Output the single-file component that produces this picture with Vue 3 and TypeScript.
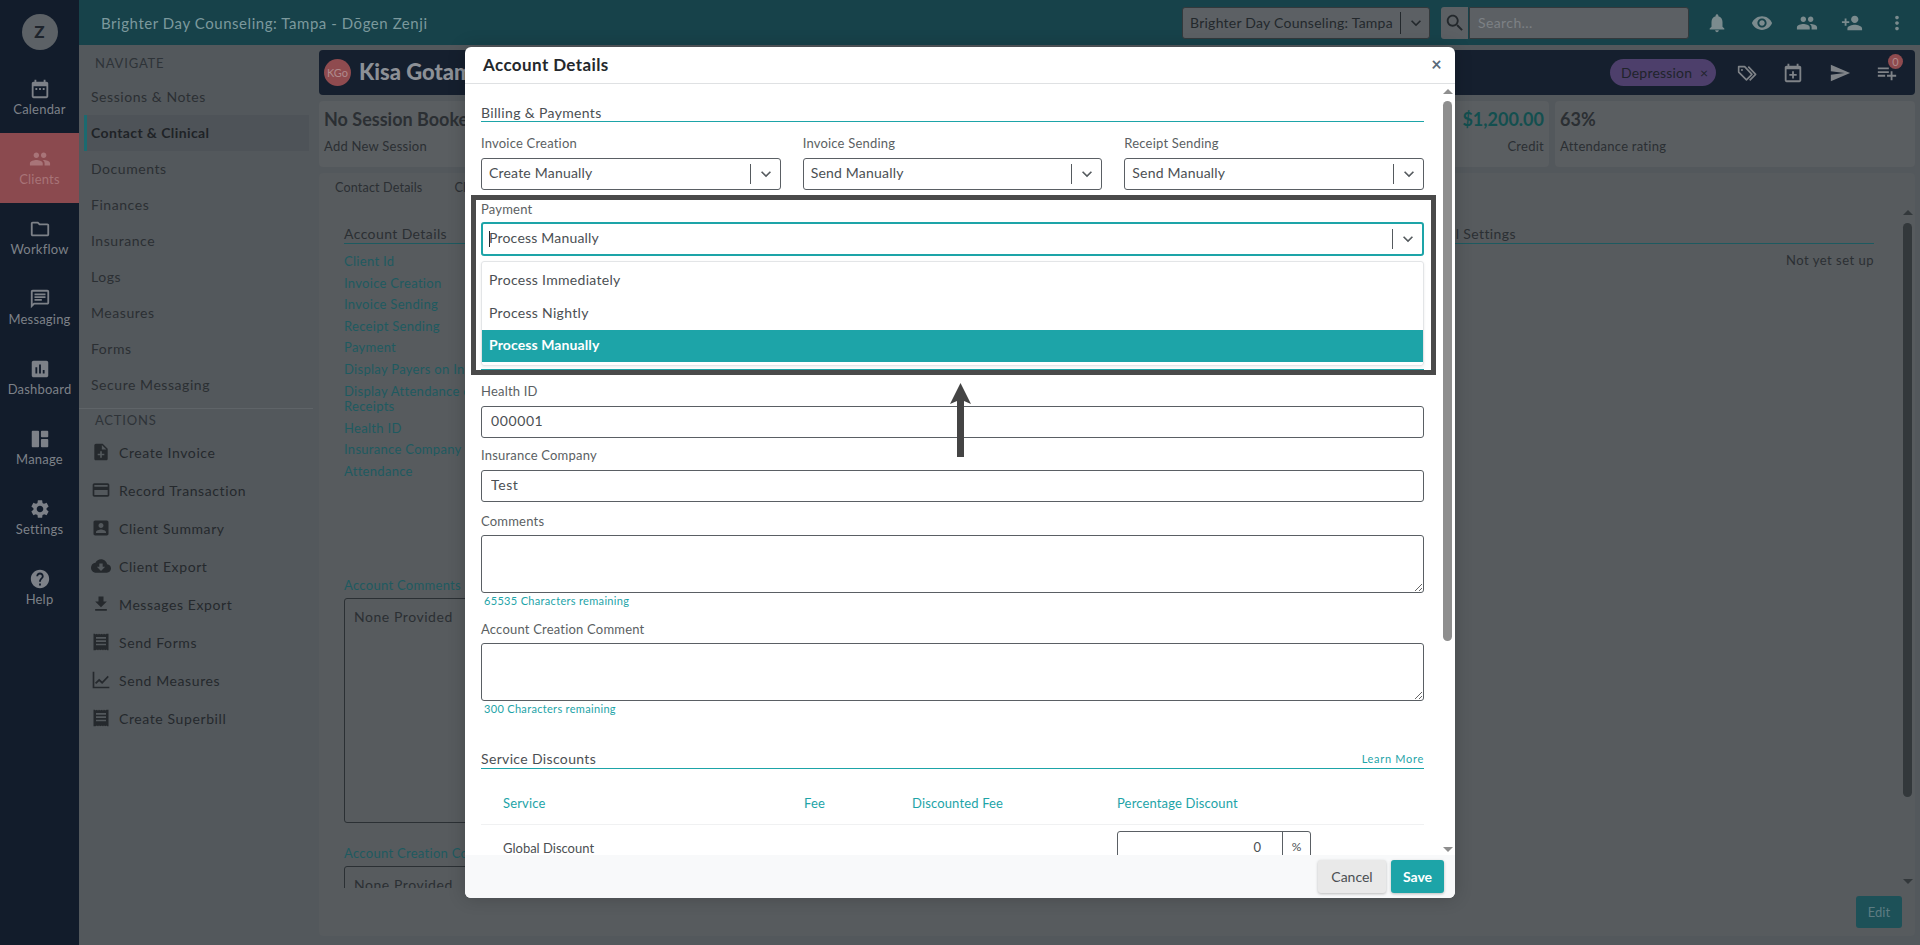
<script setup lang="ts">
// Material-style icon paths, keyed by name
const icons: Record<string, string> = {
  calendar: 'M9 11H7v2h2v-2zm4 0h-2v2h2v-2zm4 0h-2v2h2v-2zm2-7h-1V2h-2v2H8V2H6v2H5c-1.11 0-1.99.9-1.99 2L3 20c0 1.1.89 2 2 2h14c1.1 0 2-.9 2-2V6c0-1.1-.9-2-2-2zm0 16H5V9h14v11z',
  people: 'M16 11c1.66 0 2.99-1.34 2.99-3S17.66 5 16 5c-1.66 0-3 1.34-3 3s1.34 3 3 3zm-8 0c1.66 0 2.99-1.34 2.99-3S9.66 5 8 5C6.34 5 5 6.34 5 8s1.34 3 3 3zm0 2c-2.33 0-7 1.17-7 3.5V19h14v-2.5c0-2.33-4.67-3.5-7-3.5zm8 0c-.29 0-.62.02-.97.05 1.16.84 1.97 1.97 1.97 3.45V19h6v-2.5c0-2.33-4.67-3.5-7-3.5z',
  folder: 'M9.17 6l2 2H20v10H4V6h5.17M10 4H4c-1.1 0-1.99.9-1.99 2L2 18c0 1.1.9 2 2 2h16c1.1 0 2-.9 2-2V8c0-1.1-.9-2-2-2h-8l-2-2z',
  message: 'M20 2H4c-1.1 0-1.99.9-1.99 2L2 22l4-4h14c1.1 0 2-.9 2-2V4c0-1.1-.9-2-2-2zm0 14H5.17L4 17.17V4h16v12zM6 12h8v2H6zm0-3h12v2H6zm0-3h12v2H6z',
  chart: 'M19 3H5c-1.1 0-2 .9-2 2v14c0 1.1.9 2 2 2h14c1.1 0 2-.9 2-2V5c0-1.1-.9-2-2-2zM9 17H7v-7h2v7zm4 0h-2V7h2v10zm4 0h-2v-4h2v4z',
  manage: 'M4 3h6a1 1 0 0 1 1 1v16a1 1 0 0 1-1 1H4a1 1 0 0 1-1-1V4a1 1 0 0 1 1-1zm10 0h6a1 1 0 0 1 1 1v5a1 1 0 0 1-1 1h-6a1 1 0 0 1-1-1V4a1 1 0 0 1 1-1zm0 9h6a1 1 0 0 1 1 1v7a1 1 0 0 1-1 1h-6a1 1 0 0 1-1-1v-7a1 1 0 0 1 1-1z',
  gear: 'M19.14 12.94c.04-.3.06-.61.06-.94 0-.32-.02-.64-.07-.94l2.03-1.58c.18-.14.23-.41.12-.61l-1.92-3.32c-.12-.22-.37-.29-.59-.22l-2.39.96c-.5-.38-1.03-.7-1.62-.94l-.36-2.54c-.04-.24-.24-.41-.48-.41h-3.84c-.24 0-.43.17-.47.41l-.36 2.54c-.59.24-1.13.57-1.62.94l-2.39-.96c-.22-.08-.47 0-.59.22L2.74 8.87c-.12.21-.08.47.12.61l2.03 1.58c-.05.3-.09.63-.09.94s.02.64.07.94l-2.03 1.58c-.18.14-.23.41-.12.61l1.92 3.32c.12.22.37.29.59.22l2.39-.96c.5.38 1.03.7 1.62.94l.36 2.54c.05.24.24.41.48.41h3.84c.24 0 .44-.17.47-.41l.36-2.54c.59-.24 1.13-.56 1.62-.94l2.39.96c.22.08.47 0 .59-.22l1.92-3.32c.12-.22.07-.47-.12-.61l-2.01-1.58zM12 15.6c-1.98 0-3.6-1.62-3.6-3.6s1.62-3.6 3.6-3.6 3.6 1.62 3.6 3.6-1.62 3.6-3.6 3.6z',
  help: 'M12 2C6.48 2 2 6.48 2 12s4.48 10 10 10 10-4.48 10-10S17.52 2 12 2zm1 17h-2v-2h2v2zm2.07-7.75l-.9.92C13.45 12.9 13 13.5 13 15h-2v-.5c0-1.1.45-2.1 1.17-2.83l1.24-1.26c.37-.36.59-.86.59-1.41 0-1.1-.9-2-2-2s-2 .9-2 2H8c0-2.21 1.79-4 4-4s4 1.79 4 4c0 .88-.36 1.68-.93 2.25z',
  noteAdd: 'M14 2H6c-1.1 0-1.99.9-1.99 2L4 20c0 1.1.89 2 1.99 2H18c1.1 0 2-.9 2-2V8l-6-6zm2 14h-3v3h-2v-3H8v-2h3v-3h2v3h3v2zm-3-7V3.5L18.5 9H13z',
  card: 'M20 4H4c-1.11 0-1.99.89-1.99 2L2 18c0 1.11.89 2 2 2h16c1.11 0 2-.89 2-2V6c0-1.11-.89-2-2-2zm0 14H4v-6h16v6zm0-10H4V6h16v2z',
  accountBox: 'M3 5v14c0 1.1.89 2 2 2h14c1.1 0 2-.9 2-2V5c0-1.1-.9-2-2-2H5c-1.11 0-2 .9-2 2zm12 4c0 1.66-1.34 3-3 3s-3-1.34-3-3 1.34-3 3-3 3 1.34 3 3zm-9 8c0-2 4-3.1 6-3.1s6 1.1 6 3.1v1H6v-1z',
  cloud: 'M19.35 10.04C18.67 6.59 15.64 4 12 4 9.11 4 6.6 5.64 5.35 8.04 2.34 8.36 0 10.91 0 14c0 3.31 2.69 6 6 6h13c2.76 0 5-2.24 5-5 0-2.64-2.05-4.78-4.65-4.96zM17 13l-5 5-5-5h3V9h4v4h3z',
  download: 'M19 9h-4V3H9v6H5l7 7 7-7zM5 18v2h14v-2H5z',
  receipt: 'M3 2h1.5l1 1 1-1 1 1 1-1 1 1 1-1 1 1 1-1 1 1 1-1 1 1 1-1 1 1 1-1H21v20h-1.5l-1-1-1 1-1-1-1 1-1-1-1 1-1-1-1 1-1-1-1 1-1-1-1 1-1-1-1 1H3zm3 4v2h12V6zm0 4v2h12v-2zm0 4v2h12v-2zm0 0',
  trend: 'M2 2h2v18h18v2H2zm4.2 14.8l-1.4-1.4 5-5 3.6 3.4L20 7l1.4 1.4-8 8.4-3.6-3.4z',
  bell: 'M12 22c1.1 0 2-.9 2-2h-4c0 1.1.89 2 2 2zm6-6v-5c0-3.07-1.64-5.64-4.5-6.32V4c0-.83-.67-1.5-1.5-1.5s-1.5.67-1.5 1.5v.68C7.63 5.36 6 7.92 6 11v5l-2 2v1h16v-1l-2-2z',
  eye: 'M12 4.5C7 4.5 2.73 7.61 1 12c1.73 4.39 6 7.5 11 7.5s9.27-3.11 11-7.5c-1.73-4.39-6-7.5-11-7.5zM12 17c-2.76 0-5-2.24-5-5s2.24-5 5-5 5 2.24 5 5-2.24 5-5 5zm0-8c-1.66 0-3 1.34-3 3s1.34 3 3 3 3-1.34 3-3-1.34-3-3-3z',
  personAdd: 'M15 12c2.21 0 4-1.79 4-4s-1.79-4-4-4-4 1.79-4 4 1.79 4 4 4zm-9-2V7H4v3H1v2h3v3h2v-3h3v-2H6zm9 4c-2.67 0-8 1.34-8 4v2h16v-2c0-2.66-5.33-4-8-4z',
  more: 'M12 8c1.1 0 2-.9 2-2s-.9-2-2-2-2 .9-2 2 .9 2 2 2zm0 2c-1.1 0-2 .9-2 2s.9 2 2 2 2-.9 2-2-.9-2-2-2zm0 6c-1.1 0-2 .9-2 2s.9 2 2 2 2-.9 2-2-.9-2-2-2z',
  search: 'M15.5 14h-.79l-.28-.27C15.41 12.59 16 11.11 16 9.5 16 5.91 13.09 3 9.5 3S3 5.91 3 9.5 5.91 16 9.5 16c1.61 0 3.09-.59 4.23-1.57l.27.28v.79l5 4.99L20.49 19l-4.99-5zm-6 0C7.01 14 5 11.99 5 9.5S7.01 5 9.5 5 14 7.01 14 9.5 11.99 14 9.5 14z',
  send: 'M2.01 21L23 12 2.01 3 2 10l15 2-15 2z',
  eventAdd: 'M19 4h-1V2h-2v2H8V2H6v2H5C3.9 4 3 4.9 3 6v14c0 1.1.9 2 2 2h14c1.1 0 2-.9 2-2V6c0-1.1-.9-2-2-2zm0 16H5V8h14v12zM13 10h-2v3H8v2h3v3h2v-3h3v-2h-3z',
  playlistAdd: 'M14 10H2v2h12v-2zm0-4H2v2h12V6zm4 8v-4h-2v4h-4v2h4v4h2v-4h4v-2h-4zM2 16h8v-2H2v2z',
  chevron: 'M7.41 8.59L12 13.17l4.59-4.58L18 10l-6 6-6-6z'
}

const railItems = [
  { label: 'Calendar', icon: 'calendar' },
  { label: 'Clients', icon: 'people', active: true },
  { label: 'Workflow', icon: 'folder' },
  { label: 'Messaging', icon: 'message' },
  { label: 'Dashboard', icon: 'chart' },
  { label: 'Manage', icon: 'manage' },
  { label: 'Settings', icon: 'gear' },
  { label: 'Help', icon: 'help' }
]

const navItems = ['Sessions & Notes', 'Contact & Clinical', 'Documents', 'Finances', 'Insurance', 'Logs', 'Measures', 'Forms', 'Secure Messaging']

const actions = [
  { label: 'Create Invoice', icon: 'noteAdd' },
  { label: 'Record Transaction', icon: 'card' },
  { label: 'Client Summary', icon: 'accountBox' },
  { label: 'Client Export', icon: 'cloud' },
  { label: 'Messages Export', icon: 'download' },
  { label: 'Send Forms', icon: 'receipt' },
  { label: 'Send Measures', icon: 'trend' },
  { label: 'Create Superbill', icon: 'receipt' }
]

const headerIcons = ['bell', 'eye', 'people', 'personAdd', 'more']

const accountRows = [
  'Client Id', 'Invoice Creation', 'Invoice Sending', 'Receipt Sending', 'Payment',
  'Display Payers on Invoices', 'Display Attendance on Invoices and\nReceipts',
  'Health ID', 'Insurance Company', 'Attendance'
]

const billingSelects = [
  { label: 'Invoice Creation', value: 'Create Manually' },
  { label: 'Invoice Sending', value: 'Send Manually' },
  { label: 'Receipt Sending', value: 'Send Manually' }
]

const paymentOptions = ['Process Immediately', 'Process Nightly', 'Process Manually']
const selectedPayment = 'Process Manually'
</script>

<template>
  <div class="page">
    <aside class="rail">
      <div class="rail-avatar">Z</div>
      <div v-for="item in railItems" :key="item.label" class="rail-item" :class="{ active: item.active }">
        <svg viewBox="0 0 24 24" class="rail-icon"><path :d="icons[item.icon]" /></svg>
        <span>{{ item.label }}</span>
      </div>
    </aside>

    <div class="shell">
      <header class="topbar">
        <div class="topbar-title">Brighter Day Counseling: Tampa - Dōgen Zenji</div>
        <div class="topbar-right">
          <div class="location">
            <span class="location-text">Brighter Day Counseling: Tampa</span>
            <span class="location-sep"></span>
            <svg viewBox="0 0 24 24" class="location-chevron"><path :d="icons.chevron" /></svg>
          </div>
          <div class="search">
            <span class="search-btn"><svg viewBox="0 0 24 24"><path :d="icons.search" /></svg></span>
            <span class="search-input">Search...</span>
          </div>
          <div class="top-icons">
            <svg v-for="name in headerIcons" :key="name" viewBox="0 0 24 24"><path :d="icons[name]" /></svg>
          </div>
        </div>
      </header>

      <div class="workspace">
        <nav class="subnav">
          <div class="subnav-heading navigate-heading">NAVIGATE</div>
          <div
            v-for="item in navItems"
            :key="item"
            class="nav-row"
            :class="{ current: item === 'Contact & Clinical' }"
          >{{ item }}</div>
          <div class="subnav-divider"></div>
          <div class="subnav-heading actions-heading">ACTIONS</div>
          <div v-for="action in actions" :key="action.label" class="action-row">
            <svg viewBox="0 0 24 24"><path :d="icons[action.icon]" /></svg>
            <span>{{ action.label }}</span>
          </div>
        </nav>

        <main class="main">
          <div class="client-bar">
            <div class="client-avatar">KGo</div>
            <div class="client-name">Kisa Gotami</div>
            <div class="client-tools">
              <span class="chip">Depression <i>×</i></span>
              <svg viewBox="0 0 24 24" class="tag-icon">
                <path d="M4 5h6.5l8 8.5-6 6L4 11z" />
                <path d="M14.5 5l8 8.5-6.5 6.5" />
                <circle cx="7.6" cy="8.6" r="1.1" />
              </svg>
              <svg viewBox="0 0 24 24"><path :d="icons.eventAdd" /></svg>
              <svg viewBox="0 0 24 24"><path :d="icons.send" /></svg>
              <span class="badge-wrap">
                <svg viewBox="0 0 24 24"><path :d="icons.playlistAdd" /></svg>
                <span class="badge">0</span>
              </span>
            </div>
          </div>

          <div class="stats">
            <div class="stat stat-session">
              <div class="stat-title">No Session Booked</div>
              <div class="stat-sub">Add New Session</div>
            </div>
            <div class="stat stat-credit">
              <div class="stat-title money">$1,200.00</div>
              <div class="stat-sub">Credit</div>
            </div>
            <div class="stat stat-rating">
              <div class="stat-title">63%</div>
              <div class="stat-sub">Attendance rating</div>
            </div>
          </div>

          <section class="panel">
            <div class="tabs">
              <span>Contact Details</span>
              <span>Clinical Details</span>
            </div>
            <div class="panel-scroll">
              <div class="panel-col panel-left">
                <div class="panel-heading">Account Details</div>
                <div class="account-list">
                  <div v-for="row in accountRows" :key="row" class="account-row">{{ row }}</div>
                </div>
                <div class="panel-label comments-label">Account Comments</div>
                <div class="readonly-box">None Provided</div>
                <div class="panel-label creation-label">Account Creation Comment</div>
                <div class="readonly-box">None Provided</div>
              </div>
              <div class="panel-col panel-right">
                <div class="panel-heading">Clinical Settings</div>
                <div class="not-set">Not yet set up</div>
              </div>
            </div>
            <div class="panel-scrollbar">
              <span class="arrow-up"></span>
              <span class="thumb"></span>
              <span class="arrow-down"></span>
            </div>
            <button class="edit-btn">Edit</button>
          </section>
        </main>
      </div>
    </div>

    <div class="modal">
      <div class="modal-header">
        <span class="modal-title">Account Details</span>
        <span class="modal-close">×</span>
      </div>

      <div class="modal-body">
        <div class="section-heading">Billing &amp; Payments</div>
        <div class="select-grid">
          <div v-for="field in billingSelects" :key="field.label">
            <div class="field-label">{{ field.label }}</div>
            <div class="select">
              <span class="select-value">{{ field.value }}</span>
              <span class="select-sep"></span>
              <svg viewBox="0 0 24 24"><path :d="icons.chevron" /></svg>
            </div>
          </div>
        </div>

        <div class="field-label payment-label">Payment</div>
        <div class="select focused">
          <span class="caret"></span>
          <span class="select-value">{{ selectedPayment }}</span>
          <span class="select-sep"></span>
          <svg viewBox="0 0 24 24"><path :d="icons.chevron" /></svg>
        </div>
        <ul class="options">
          <li v-for="opt in paymentOptions" :key="opt" :class="{ selected: opt === selectedPayment }">{{ opt }}</li>
        </ul>
        <div class="hidden-rule"></div>

        <div class="field-label">Health ID</div>
        <input class="text-input" value="000001" readonly />
        <div class="field-label insurance-label">Insurance Company</div>
        <input class="text-input" value="Test" readonly />
        <div class="field-label comments tight">Comments</div>
        <textarea class="area" readonly></textarea>
        <div class="remaining">65535 Characters remaining</div>
        <div class="field-label tight creation">Account Creation Comment</div>
        <textarea class="area" readonly></textarea>
        <div class="remaining">300 Characters remaining</div>

        <div class="section-heading discounts">
          <span>Service Discounts</span>
          <a class="learn">Learn More</a>
        </div>
        <div class="discount-head">
          <span class="col-service">Service</span>
          <span class="col-fee">Fee</span>
          <span class="col-disc">Discounted Fee</span>
          <span>Percentage Discount</span>
        </div>
        <div class="discount-row">
          <span class="col-global">Global Discount</span>
          <div class="percent">
            <span class="percent-value">0</span>
            <span class="percent-unit">%</span>
          </div>
        </div>
      </div>

      <div class="modal-scrollbar">
        <span class="arrow-up"></span>
        <span class="thumb"></span>
        <span class="arrow-down"></span>
      </div>

      <div class="modal-footer">
        <button class="btn btn-cancel">Cancel</button>
        <button class="btn btn-save">Save</button>
      </div>

      <!-- annotation drawn over the screenshot -->
      <div class="callout"></div>
      <svg class="callout-arrow" viewBox="0 0 21 74"><path d="M10.5 0L21 21L14 18V74H7V18L0 21z" /></svg>
    </div>
  </div>
</template>

<style>
html, body {
  margin: 0;
  height: 100%;
  overflow: hidden;
}
</style>

<style scoped>
.page {
  position: relative;
  display: flex;
  width: 1920px;
  height: 945px;
  overflow: hidden;
  background: #53585c;
  font-family: Lato, "Open Sans", sans-serif;
  font-size: 14px;
  color: #2b2f33;
  letter-spacing: 0.4px;
}

svg {
  fill: currentColor;
  display: block;
}

/* left rail */
.rail {
  width: 79px;
  flex: none;
  background: #121c2b;
  color: #7d8188;
}
.rail-avatar {
  width: 36px;
  height: 36px;
  margin: 14px auto 13px;
  border-radius: 50%;
  background: #5c6166;
  color: #1e242c;
  font-size: 17px;
  font-weight: 900;
  line-height: 36px;
  text-align: center;
}
.rail-item {
  height: 70px;
  display: flex;
  flex-direction: column;
  align-items: center;
  padding-top: 15px;
  box-sizing: border-box;
  font-size: 13px;
  line-height: 16px;
  letter-spacing: 0.2px;
}
.rail-item.active {
  background: #8b4a4f;
  color: #a87478;
}
.rail-icon {
  width: 22px;
  height: 22px;
  margin-bottom: 1px;
}

/* top bar */
.shell {
  flex: 1;
  display: flex;
  flex-direction: column;
  min-width: 0;
}
.topbar {
  height: 45px;
  flex: none;
  display: flex;
  align-items: center;
  justify-content: space-between;
  padding-left: 22px;
  background: #17424a;
  color: #7c999d;
}
.topbar-title {
  font-size: 15px;
  letter-spacing: 0.55px;
}
.topbar-right {
  display: flex;
  align-items: center;
}
.location {
  width: 248px;
  height: 32px;
  box-sizing: border-box;
  display: flex;
  align-items: center;
  padding-left: 7px;
  background: #5c6064;
  border: 1px solid #33393c;
  border-radius: 3px;
  color: #23282c;
  letter-spacing: 0.25px;
}
.location-text {
  width: 210px;
  white-space: nowrap;
}
.location-sep {
  width: 1px;
  height: 22px;
  background: #23282c;
}
.location-chevron {
  width: 20px;
  height: 20px;
  margin-left: 5px;
}
.search {
  display: flex;
  height: 32px;
  margin-left: 11px;
}
.search-btn {
  width: 27px;
  background: #5c6064;
  border-radius: 3px 0 0 3px;
  color: #23282c;
  display: flex;
  align-items: center;
  justify-content: center;
}
.search-btn svg {
  width: 22px;
  height: 22px;
}
.search-input {
  width: 220px;
  box-sizing: border-box;
  margin-left: 1px;
  padding: 6px 8px;
  background: #5c6064;
  border: 1px solid #33393c;
  border-radius: 0 3px 3px 0;
  color: #7d8185;
}
.top-icons {
  display: flex;
  align-items: center;
  width: 231px;
  padding-left: 17px;
  gap: 23px;
  box-sizing: border-box;
  color: #7b8b8e;
}
.top-icons svg {
  width: 22px;
  height: 22px;
}

/* secondary nav */
.workspace {
  flex: 1;
  display: flex;
  min-height: 0;
}
.subnav {
  width: 240px;
  flex: none;
  padding-top: 9px;
  box-sizing: border-box;
}
.subnav-heading {
  height: 18px;
  padding-left: 16px;
  font-size: 13px;
  line-height: 18px;
  letter-spacing: 0.8px;
  color: #2e3338;
}
.navigate-heading {
  margin-bottom: 7px;
}
.nav-row {
  height: 36px;
  margin-left: 5px;
  width: 225px;
  padding-left: 7px;
  box-sizing: border-box;
  line-height: 36px;
  letter-spacing: 0.55px;
}
.nav-row.current {
  background: #4e5358;
  border-left: 3px solid #1c6a70;
  padding-left: 4px;
  font-weight: 700;
  letter-spacing: 0.4px;
  color: #1f2327;
}
.subnav-divider {
  height: 1px;
  width: 234px;
  margin-top: 5px;
  background: #5f6468;
}
.actions-heading {
  margin-bottom: 4px;
  margin-top: 2px;
}
.action-row {
  height: 38px;
  display: flex;
  align-items: center;
  gap: 8px;
  padding-left: 12px;
  letter-spacing: 0.6px;
  color: #25292d;
}
.action-row svg {
  width: 20px;
  height: 20px;
}

/* main column */
.main {
  flex: 1;
  min-width: 0;
  padding: 5px 5px 9px 0;
  display: flex;
  flex-direction: column;
  gap: 6px;
  box-sizing: border-box;
}
.client-bar {
  height: 45px;
  flex: none;
  display: flex;
  align-items: center;
  padding: 0 17px 0 5px;
  background: #151f2e;
  border-radius: 4px;
}
.client-avatar {
  width: 27px;
  height: 27px;
  border-radius: 50%;
  background: #8f4b4f;
  color: #b08a8c;
  font-size: 11px;
  line-height: 27px;
  text-align: center;
  letter-spacing: 0;
}
.client-name {
  margin: -2px 0 0 8px;
  color: #8c9096;
  font-size: 22px;
  font-weight: 900;
  letter-spacing: 0;
}
.client-tools {
  margin-left: auto;
  display: flex;
  align-items: center;
  gap: 25px;
  color: #7f8388;
}
.client-tools svg {
  width: 22px;
  height: 22px;
}
.client-tools .tag-icon {
  fill: none;
  stroke: currentColor;
  stroke-width: 1.8;
  stroke-linejoin: round;
}
.tag-icon circle {
  fill: currentColor;
  stroke: none;
}
.chip {
  width: 106px;
  height: 27px;
  margin-right: -6px;
  box-sizing: border-box;
  padding-left: 11px;
  border-radius: 14px;
  background: #4d3f6b;
  color: #20242c;
  line-height: 27px;
  white-space: nowrap;
  letter-spacing: 0.2px;
}
.chip i {
  font-style: normal;
  margin-left: 4px;
}
.badge-wrap {
  position: relative;
}
.badge {
  position: absolute;
  top: -8px;
  right: -5px;
  width: 15px;
  height: 15px;
  border-radius: 50%;
  background: #8f4b4f;
  color: #b08a8c;
  font-size: 11px;
  line-height: 15px;
  text-align: center;
  letter-spacing: 0;
}

.stats {
  height: 66px;
  flex: none;
  display: flex;
  gap: 6px;
}
.stat {
  box-sizing: border-box;
  padding: 7px 5px;
  background: #5a5e61;
  border-radius: 4px;
}
.stat-session {
  width: 680px;
}
.stat-credit {
  flex: 1;
  text-align: right;
}
.stat-rating {
  width: 360px;
}
.stat-title {
  font-size: 18px;
  font-weight: 700;
  line-height: 22px;
  letter-spacing: 0;
  white-space: nowrap;
}
.money {
  color: #134f4f;
}
.stat-sub {
  margin-top: 7px;
  font-size: 13px;
  line-height: 18px;
  letter-spacing: 0.25px;
}

/* main panel behind the modal */
.panel {
  position: relative;
  flex: 1;
  min-height: 0;
  background: #575b5e;
  border-radius: 4px;
}
.tabs {
  display: flex;
  gap: 32px;
  padding: 7px 0 0 16px;
  height: 19px;
  line-height: 16px;
  font-size: 12.6px;
  letter-spacing: 0.15px;
}
.panel-scroll {
  height: 689px;
  padding: 27px 41px 0 25px;
  display: flex;
  justify-content: space-between;
  overflow: hidden;
  box-sizing: border-box;
}
.panel-col {
  display: flex;
  flex-direction: column;
}
.panel-left {
  width: 1040px;
}
.panel-right {
  width: 462px;
}
.panel-heading {
  height: 18px;
  flex: none;
  line-height: 16px;
  border-bottom: 1px solid #1d5a60;
  box-sizing: border-box;
  font-size: 14px;
  letter-spacing: 0.4px;
}
.account-list {
  margin-top: 7px;
  flex: none;
}
.account-row {
  padding: 3px 0;
  line-height: 15.6px;
  font-size: 13px;
  color: #1e5a60;
  letter-spacing: 0.3px;
  white-space: pre-line;
}
.panel-label {
  font-size: 13px;
  line-height: 16px;
  color: #1e5a60;
  letter-spacing: 0.3px;
  flex: none;
}
.comments-label {
  margin-top: 94px;
}
.creation-label {
  margin-top: 22px;
}
.readonly-box {
  flex: none;
  height: 225px;
  margin-top: 5px;
  box-sizing: border-box;
  padding: 9px 9px;
  border: 1px solid #2b3034;
  border-radius: 3px;
  letter-spacing: 0.55px;
}
.not-set {
  margin-top: 8px;
  line-height: 16px;
  text-align: right;
  font-size: 13px;
  letter-spacing: 0.5px;
}
.panel-scrollbar {
  position: absolute;
  top: 37px;
  right: 3px;
  bottom: 52px;
  width: 9px;
  display: flex;
  flex-direction: column;
  align-items: center;
  color: #33383b;
}
.edit-btn {
  position: absolute;
  right: 13px;
  bottom: 8px;
  width: 46px;
  height: 32px;
  border: none;
  border-radius: 3px;
  background: #1d5158;
  color: #5d7c82;
  font: inherit;
  font-size: 13px;
}
.thumb {
  display: block;
  width: 9px;
  border-radius: 5px;
  background: currentColor;
}
.panel-scrollbar .thumb {
  height: 574px;
  margin-top: 8px;
}
.arrow-up, .arrow-down {
  display: block;
  width: 0;
  height: 0;
  border-left: 5px solid transparent;
  border-right: 5px solid transparent;
}
.arrow-up {
  border-bottom: 5px solid currentColor;
}
.arrow-down {
  border-top: 5px solid currentColor;
  margin-top: auto;
}

/* modal */
.modal {
  position: absolute;
  left: 465px;
  top: 47px;
  width: 990px;
  height: 851px;
  display: flex;
  flex-direction: column;
  background: #fff;
  border-radius: 6px;
  box-shadow: 0 0 18px rgba(0, 0, 0, 0.2);
  overflow: hidden;
  color: #4b4f53;
  letter-spacing: 0.3px;
}
.modal-header {
  height: 37px;
  flex: none;
  display: flex;
  align-items: center;
  justify-content: space-between;
  padding: 0 13px 2px 18px;
  box-sizing: border-box;
  border-bottom: 1px solid #dfe1e3;
}
.modal-title {
  font-size: 17px;
  font-weight: 700;
  color: #24282c;
  letter-spacing: 0.4px;
}
.modal-close {
  font-size: 18px;
  font-weight: 700;
  color: #5a6a7a;
  line-height: 20px;
}
.modal-body {
  flex: 1;
  min-height: 0;
  overflow: hidden;
  padding: 0 31px 0 16px;
}
.section-heading {
  height: 38px;
  padding-top: 21px;
  box-sizing: border-box;
  border-bottom: 1px solid #1da4a8;
  line-height: 16px;
  letter-spacing: 0.35px;
  color: #4b4f53;
}
.select-grid {
  display: grid;
  grid-template-columns: repeat(3, 1fr);
  column-gap: 22px;
  margin-top: 13px;
}
.field-label {
  height: 16px;
  margin-bottom: 7px;
  font-size: 13px;
  line-height: 17px;
  color: #5b5f63;
  letter-spacing: 0.2px;
}
.payment-label {
  margin: 11px 0 5px;
}
.select {
  position: relative;
  height: 32px;
  display: flex;
  align-items: center;
  padding-left: 7px;
  box-sizing: border-box;
  border: 1px solid #5a5f64;
  border-radius: 3px;
  color: #4b4f53;
  letter-spacing: 0.2px;
}
.select svg {
  width: 20px;
  height: 20px;
  margin: 0 4px 0 5px;
  color: #555a5e;
}
.select-value {
  flex: 1;
  padding-bottom: 3px;
}
.select-sep {
  width: 1px;
  height: 20px;
  background: #555a5e;
}
.select.focused {
  height: 34px;
  border: 2px solid #1da4a8;
  padding-left: 6px;
}
.caret {
  width: 1px;
  height: 16px;
  background: #23282c;
  margin-right: -1px;
}
.options {
  list-style: none;
  margin: 5px 0 0;
  padding: 2px 0 0;
  height: 105px;
  box-sizing: border-box;
  border: 1px solid #e3e5e7;
  border-radius: 3px;
  box-shadow: 0 1px 3px rgba(0, 0, 0, 0.08);
  color: #4b4f53;
}
.options li {
  height: 33px;
  padding-left: 7px;
  line-height: 32px;
}
.options li.selected {
  height: 32px;
  line-height: 30px;
  background: #1da4a8;
  color: #fff;
  font-weight: 700;
  letter-spacing: 0.1px;
}
.hidden-rule {
  height: 1px;
  margin: 3px 0 13px;
  background: #1da4a8;
}
.text-input {
  display: block;
  width: 100%;
  height: 32px;
  box-sizing: border-box;
  padding: 0 9px 3px;
  border: 1px solid #5a5f64;
  border-radius: 3px;
  font: inherit;
  letter-spacing: 0.6px;
  color: #4b4f53;
  outline: none;
}
.insurance-label {
  margin-top: 9px;
}
.comments {
  margin-top: 11px;
}
.tight {
  margin-bottom: 6px;
}
.area {
  display: block;
  width: 100%;
  height: 58px;
  box-sizing: border-box;
  border: 1px solid #5a5f64;
  border-radius: 3px;
  resize: vertical;
  outline: none;
}
.remaining {
  height: 12px;
  margin: 2px 0 0 3px;
  font-size: 11px;
  line-height: 12px;
  color: #1da4a8;
  letter-spacing: 0.32px;
}
.creation {
  margin-top: 14px;
}
.discounts {
  display: flex;
  justify-content: space-between;
  margin-top: 36px;
  height: 18px;
  padding-top: 0;
}
.learn {
  font-size: 11px;
  color: #1da4a8;
  letter-spacing: 0.7px;
}
.discount-head {
  height: 56px;
  display: flex;
  align-items: center;
  box-sizing: border-box;
  border-bottom: 1px solid #f0f1f2;
  padding-top: 12px;
  font-size: 13px;
  color: #1da4a8;
  letter-spacing: 0.15px;
}
.col-service {
  margin-left: 22px;
  width: 301px;
}
.col-fee {
  width: 108px;
}
.col-disc {
  width: 205px;
}
.discount-row {
  display: flex;
  align-items: flex-start;
  padding-top: 6px;
  font-size: 13px;
  color: #4b4f53;
  letter-spacing: 0;
}
.col-global {
  margin: 9px 0 0 22px;
  width: 614px;
}
.percent {
  width: 194px;
  height: 32px;
  display: flex;
  box-sizing: border-box;
  border: 1px solid #5a5f64;
  border-radius: 3px;
  line-height: 30px;
}
.percent-value {
  flex: 1;
  text-align: right;
  padding-right: 21px;
}
.percent-unit {
  width: 27px;
  text-align: center;
  border-left: 1px solid #5a5f64;
  font-size: 12px;
}
.modal-scrollbar {
  position: absolute;
  top: 42px;
  bottom: 46px;
  right: 3px;
  width: 9px;
  display: flex;
  flex-direction: column;
  align-items: center;
  color: #8e8e8e;
}
.modal-scrollbar .thumb {
  height: 540px;
  margin-top: 7px;
}
.modal-footer {
  height: 43px;
  flex: none;
  display: flex;
  justify-content: flex-end;
  align-items: center;
  gap: 5px;
  padding: 0 11px 0 0;
  background: #f8f9fa;
}
.btn {
  height: 33px;
  border: none;
  border-radius: 3px;
  font: inherit;
  box-shadow: 0 1px 3px rgba(0, 0, 0, 0.25);
}
.btn-cancel {
  width: 68px;
  background: #e9e9e9;
  color: #4b4f53;
}
.btn-save {
  width: 53px;
  background: #1da4a8;
  color: #fff;
  font-weight: 700;
}

/* annotation */
.callout {
  position: absolute;
  left: 6px;
  top: 148px;
  width: 965px;
  height: 180px;
  box-sizing: border-box;
  border: 5px solid #4a4a4a;
  pointer-events: none;
}
.callout-arrow {
  position: absolute;
  left: 485px;
  top: 336px;
  width: 21px;
  height: 74px;
  fill: #444;
}
</style>
